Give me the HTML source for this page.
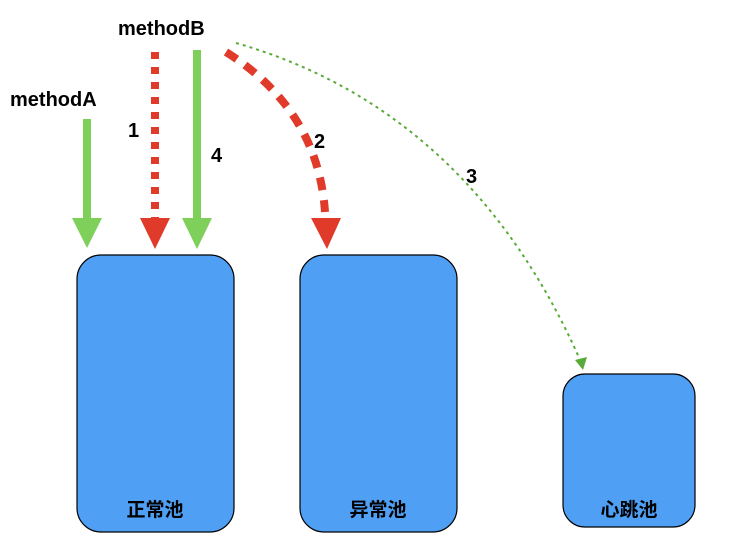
<!DOCTYPE html>
<html><head><meta charset="utf-8"><style>
html,body{margin:0;padding:0;background:#fff;width:729px;height:550px;overflow:hidden}
svg{display:block}
text{font-family:"Liberation Sans","Noto Sans CJK SC",sans-serif;font-weight:bold;fill:#000}
</style></head><body>
<svg width="729" height="550" viewBox="0 0 729 550">
<rect x="77" y="255" width="157" height="277" rx="24" fill="#4f9ff5" stroke="#000" stroke-width="1.2"/>
<rect x="300" y="255" width="157" height="277" rx="24" fill="#4f9ff5" stroke="#000" stroke-width="1.2"/>
<rect x="563" y="374" width="132" height="153" rx="22" fill="#4f9ff5" stroke="#000" stroke-width="1.2"/>
<text x="155" y="516" font-size="19" text-anchor="middle">正常池</text>
<text x="378" y="516" font-size="19" text-anchor="middle">异常池</text>
<text x="629" y="516" font-size="19" text-anchor="middle">心跳池</text>
<text x="10" y="106" font-size="20">methodA</text>
<text x="118" y="35" font-size="20">methodB</text>
<text x="128" y="137" font-size="20">1</text>
<text x="211" y="162" font-size="20">4</text>
<text x="314" y="148" font-size="20">2</text>
<text x="466" y="183" font-size="20">3</text>
<line x1="87" y1="119" x2="87" y2="220" stroke="#7ed05a" stroke-width="8"/>
<polygon points="72,218 102,218 87,248" fill="#7ed05a"/>
<line x1="155" y1="52" x2="155" y2="218" stroke="#e03b2a" stroke-width="8" stroke-dasharray="7,8"/>
<polygon points="140,218 170,218 155,249" fill="#e03b2a"/>
<line x1="197" y1="50" x2="197" y2="220" stroke="#7ed05a" stroke-width="8"/>
<polygon points="182,218 212,218 197,249" fill="#7ed05a"/>
<path d="M226 52 Q318 110 325 212" fill="none" stroke="#e03b2a" stroke-width="8" stroke-dasharray="13,10"/>
<polygon points="311,218 341,218 327,249" fill="#e03b2a"/>
<path d="M236 43 Q470 110 581 362" fill="none" stroke="#5aaa3a" stroke-width="2" stroke-dasharray="3,4"/>
<polygon points="575,360 587,357 583,370" fill="#5aaa3a"/>
</svg>
</body></html>
